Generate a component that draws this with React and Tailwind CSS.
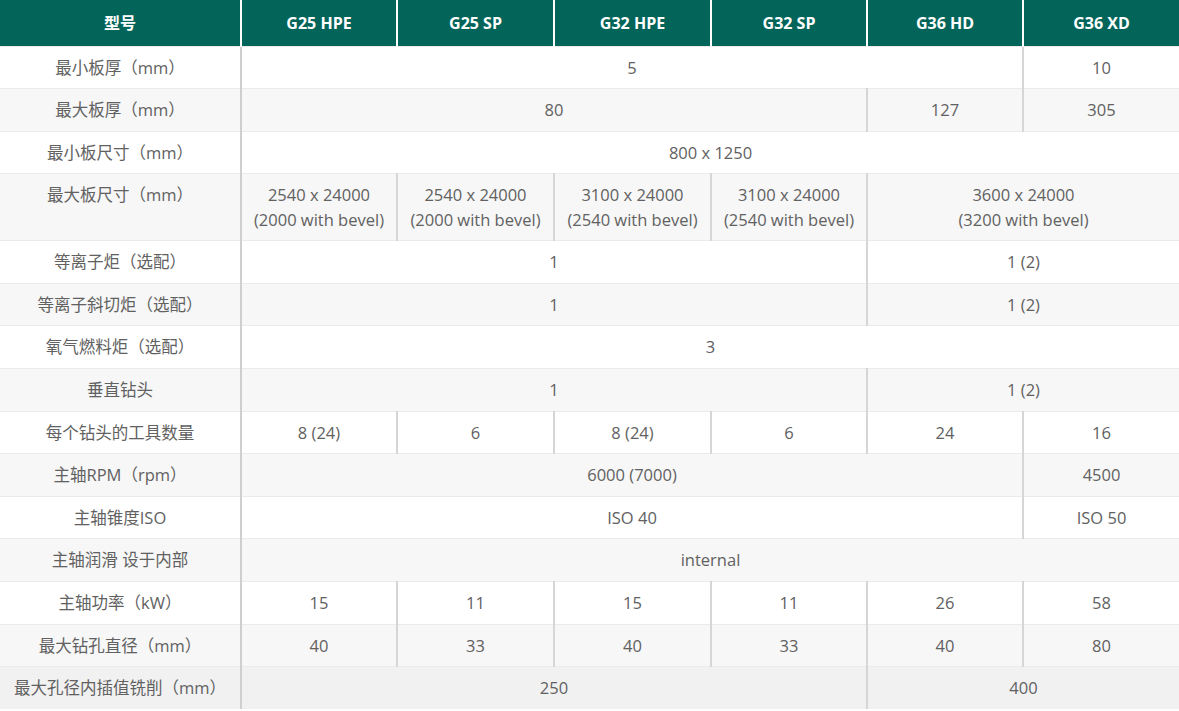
import React from 'react';

const headers = ['型号', 'G25 HPE', 'G25 SP', 'G32 HPE', 'G32 SP', 'G36 HD', 'G36 XD'];

// each row: label, cells as [text, colspan]
const rows = [
  { label: '最小板厚（mm）', cells: [['5', 5], ['10', 1]] },
  { label: '最大板厚（mm）', cells: [['80', 4], ['127', 1], ['305', 1]] },
  { label: '最小板尺寸（mm）', cells: [['800 x 1250', 6]] },
  {
    label: '最大板尺寸（mm）',
    tall: true,
    cells: [
      [['2540 x 24000', '(2000 with bevel)'], 1],
      [['2540 x 24000', '(2000 with bevel)'], 1],
      [['3100 x 24000', '(2540 with bevel)'], 1],
      [['3100 x 24000', '(2540 with bevel)'], 1],
      [['3600 x 24000', '(3200 with bevel)'], 2],
    ],
  },
  { label: '等离子炬（选配）', cells: [['1', 4], ['1 (2)', 2]] },
  { label: '等离子斜切炬（选配）', cells: [['1', 4], ['1 (2)', 2]] },
  { label: '氧气燃料炬（选配）', cells: [['3', 6]] },
  { label: '垂直钻头', cells: [['1', 4], ['1 (2)', 2]] },
  { label: '每个钻头的工具数量', cells: [['8 (24)', 1], ['6', 1], ['8 (24)', 1], ['6', 1], ['24', 1], ['16', 1]] },
  { label: '主轴RPM（rpm）', cells: [['6000 (7000)', 5], ['4500', 1]] },
  { label: '主轴锥度ISO', cells: [['ISO 40', 5], ['ISO 50', 1]] },
  { label: '主轴润滑 设于内部', cells: [['internal', 6]] },
  { label: '主轴功率（kW）', cells: [['15', 1], ['11', 1], ['15', 1], ['11', 1], ['26', 1], ['58', 1]] },
  { label: '最大钻孔直径（mm）', cells: [['40', 1], ['33', 1], ['40', 1], ['33', 1], ['40', 1], ['80', 1]] },
  { label: '最大孔径内插值铣削（mm）', cells: [['250', 4], ['400', 2]] },
];

function rowBg(i) {
  if (i === rows.length - 1) return 'bg-[#f1f1f1]';
  return i % 2 === 0 ? 'bg-white' : 'bg-[#f7f7f7]';
}

export default function App() {
  return (
    <div className="w-[1179px] bg-white font-['Open_Sans','Noto_Sans_CJK_SC',sans-serif] text-[16.5px] text-[#616161]">
      <table className="w-full table-fixed border-collapse">
        <colgroup>
          <col className="w-[241px]" />
          <col className="w-[156px]" />
          <col className="w-[157px]" />
          <col className="w-[157px]" />
          <col className="w-[156px]" />
          <col className="w-[156px]" />
          <col className="w-[156px]" />
        </colgroup>
        <thead>
          <tr className="h-[46px] bg-[#03655a]">
            {headers.map((h, i) => (
              <th
                key={h}
                className={
                  'p-0 text-center text-[16px] font-bold text-white border-white ' +
                  (i < headers.length - 1 ? 'border-r-2' : '')
                }
              >
                {h}
              </th>
            ))}
          </tr>
        </thead>
        <tbody>
          {rows.map((r, i) => (
            <tr key={r.label} className={(r.tall ? 'h-[67px] ' : 'h-[42.6px] ') + rowBg(i)}>
              <td className="border-t border-r-2 border-t-[#ebebeb] border-r-[#cfcfcf] px-1 pt-[8px] pb-0 align-top text-center leading-[25px] whitespace-nowrap">
                {r.label}
              </td>
              {r.cells.map(([v, span], j) => (
                <td
                  key={j}
                  colSpan={span}
                  className={
                    'border-t border-t-[#ebebeb] px-0 pt-[8px] pb-0 align-top text-center leading-[25px] whitespace-nowrap ' +
                    (j < r.cells.length - 1 ? 'border-r-2 border-r-[#d6d6d6]' : '')
                  }
                >
                  {Array.isArray(v) ? (
                    <>
                      <div>{v[0]}</div>
                      <div>{v[1]}</div>
                    </>
                  ) : (
                    v
                  )}
                </td>
              ))}
            </tr>
          ))}
        </tbody>
      </table>
    </div>
  );
}
